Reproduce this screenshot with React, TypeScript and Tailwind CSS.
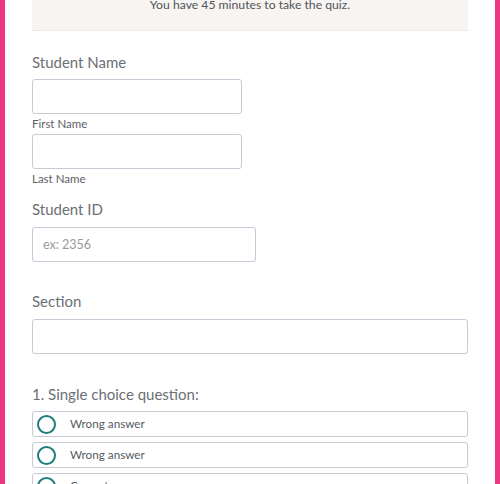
import React from 'react';

const font = { fontFamily: 'Lato, "Noto Sans", sans-serif' };

const TextBox = ({ w, placeholder }: { w: string; placeholder?: string }) => (
  <input
    type="text"
    placeholder={placeholder}
    className={`${w} h-[35px] rounded-[3px] border border-[#c8cad6] bg-white px-[10px] text-[12.5px] text-[#555] placeholder:text-[#9a9a9a] outline-none`}
  />
);

const Option = ({ label }: { label: string }) => (
  <div className="flex h-[26px] items-center rounded-[3px] border border-[#c8cad6] bg-white pl-[4px]">
    <span className="h-[19px] w-[19px] rounded-full border-2 border-[#1d7f7c]" />
    <span className="ml-[14px] text-[11.7px] text-[#555b61]">{label}</span>
  </div>
);

export default function App() {
  return (
    <div style={font} className="flex h-[484px] w-[500px] flex-col overflow-hidden border-x-[5px] border-[#ec3883] bg-white px-[27px]">
      <div className="mt-[-41px] flex h-[72px] shrink-0 items-end justify-center border-b border-dotted border-[#e2dfdc] bg-[#f7f4f2] pb-[15px]">
        <p className="text-[12.2px] leading-5 text-[#50555a]">You have 45 minutes to take the quiz.</p>
      </div>

      <h3 className="mt-[19px] text-[15px] leading-6 text-[#6b7076]">Student Name</h3>
      <div className="mt-[5px] flex flex-col">
        <TextBox w="w-[210px]" />
        <span className="mt-[2px] text-[11.5px] leading-4 text-[#5c6167]">First Name</span>
        <div className="mt-[2px]">
          <TextBox w="w-[210px]" />
        </div>
        <span className="mt-[2px] text-[11.5px] leading-4 text-[#5c6167]">Last Name</span>
      </div>

      <h3 className="mt-[10px] text-[15px] leading-6 text-[#6b7076]">Student ID</h3>
      <div className="mt-[6px]">
        <TextBox w="w-[224px]" placeholder="ex: 2356" />
      </div>

      <h3 className="mt-[27px] text-[15px] leading-6 text-[#6b7076]">Section</h3>
      <div className="mt-[6px]">
        <TextBox w="w-full" />
      </div>

      <h3 className="mt-[28px] text-[15px] leading-6 text-[#6b7076]">1. Single choice question:</h3>
      <div className="mt-[5px] flex flex-col gap-[5px]">
        <Option label="Wrong answer" />
        <Option label="Wrong answer" />
        <Option label="Correct answer" />
      </div>
    </div>
  );
}
